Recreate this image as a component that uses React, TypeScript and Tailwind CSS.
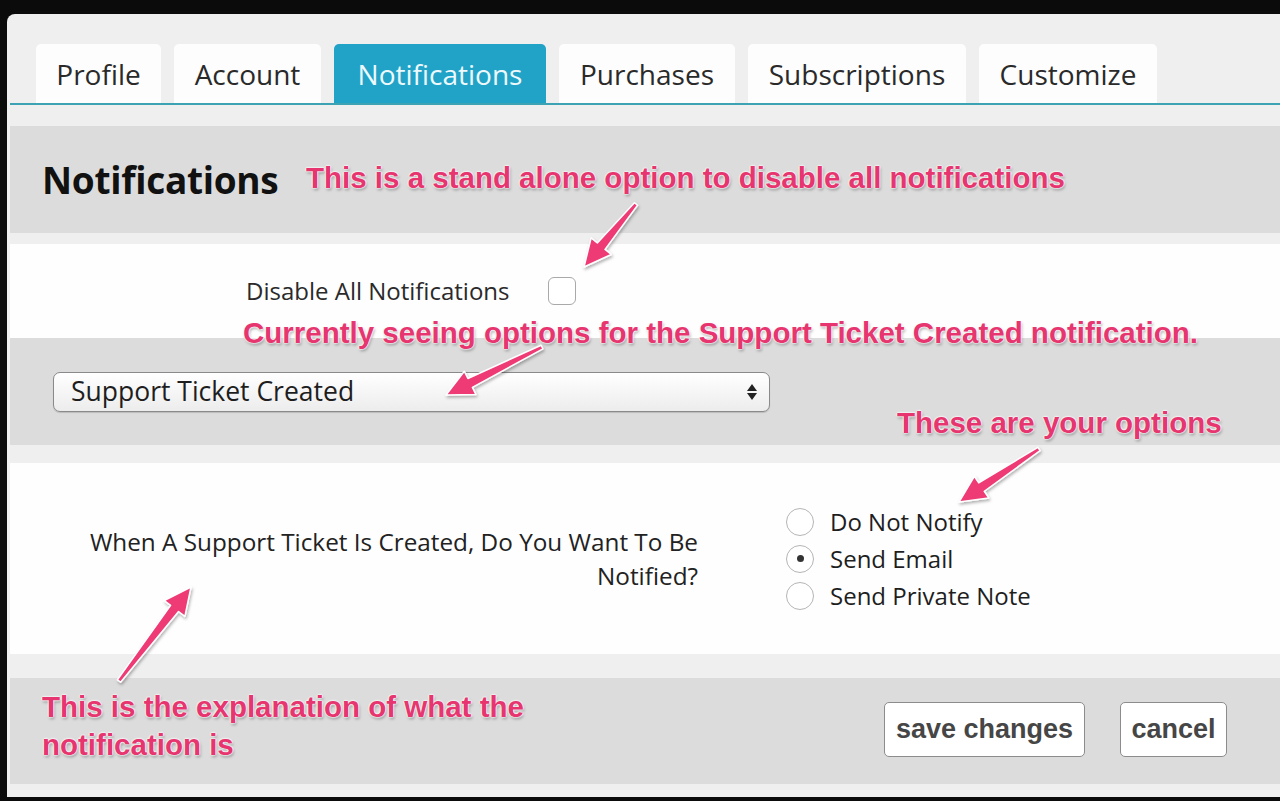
import React from "react";

const tabs = [
  { label: "Profile", w: "w-[125px]" },
  { label: "Account", w: "w-[147px]" },
  { label: "Notifications", w: "w-[212px]", active: true },
  { label: "Purchases", w: "w-[176px]" },
  { label: "Subscriptions", w: "w-[218px]" },
  { label: "Customize", w: "w-[178px]" },
];

const options = [
  { label: "Do Not Notify", checked: false },
  { label: "Send Email", checked: true },
  { label: "Send Private Note", checked: false },
];

// arrows drawn over the screenshot: tail -> tip
const arrows = [
  { x1: 636, y1: 204, x2: 584, y2: 267 },
  { x1: 542, y1: 347, x2: 446, y2: 395 },
  { x1: 1039, y1: 449, x2: 959, y2: 502 },
  { x1: 119, y1: 681, x2: 191, y2: 587 },
];

const arrowPoints = (a: { x1: number; y1: number; x2: number; y2: number }) => {
  const dx = a.x2 - a.x1;
  const dy = a.y2 - a.y1;
  const len = Math.hypot(dx, dy);
  const ux = dx / len;
  const uy = dy / len;
  const nx = -uy;
  const ny = ux;
  const head = 27;
  const bx = a.x2 - ux * head;
  const by = a.y2 - uy * head;
  const pts: [number, number][] = [
    [a.x1 + nx * 2, a.y1 + ny * 2],
    [bx + nx * 5, by + ny * 5],
    [bx + nx * 13, by + ny * 13],
    [a.x2, a.y2],
    [bx - nx * 13, by - ny * 13],
    [bx - nx * 5, by - ny * 5],
    [a.x1 - nx * 2, a.y1 - ny * 2],
  ];
  return pts.map((p) => p.join(",")).join(" ");
};

const Note: React.FC<{ className: string; children: React.ReactNode }> = ({ className, children }) => (
  <div
    className={
      "absolute font-['Liberation_Sans',Arial,sans-serif] font-bold text-[29.5px] leading-[38px] text-[#e6356f] whitespace-nowrap [text-shadow:0_0_2px_#fff,0_0_2px_#fff,0_0_2px_#fff,1px_2px_3px_rgba(0,0,0,0.35)] " +
      className
    }
  >
    {children}
  </div>
);

const App: React.FC = () => {
  return (
    <div className="relative w-[1280px] h-[801px] overflow-hidden bg-[#0b0b0c] font-['Open_Sans',sans-serif]">
      <div className="ml-[7px] mt-[14px] h-[783px] rounded-tl-[8px] bg-[#efefef] pt-[30px] flex flex-col">
        {/* tab row */}
        <div className="ml-[3px] pl-[26px] flex gap-[13px] border-b-2 border-[#3da3b4]">
          {tabs.map((t) => (
            <div
              key={t.label}
              className={
                "h-[59px] rounded-t-[5px] flex items-center justify-center text-[28px] " +
                t.w +
                (t.active ? " bg-[#20a3c7] text-[#eef9fc]" : " bg-[#fdfdfd] text-[#2a2a2a]")
              }
            >
              {t.label}
            </div>
          ))}
        </div>

        <div className="ml-[3px] flex flex-col">
          <div className="h-[21px]" />
          <div className="h-[107px] bg-[#dcdcdc] flex items-center pl-[32px]">
            <h2 className="text-[37px] font-bold text-[#111] tracking-[-0.3px]">Notifications</h2>
          </div>
          <div className="h-[11px]" />
          <div className="h-[94px] bg-[#fefefe] flex items-center pl-[236px] gap-[38px]">
            <span className="text-[24px] text-[#2a2a2a]">Disable All Notifications</span>
            <span className="w-[28px] h-[28px] rounded-[6px] border border-[#a9a9a9] bg-white" />
          </div>
          <div className="h-[107px] bg-[#dcdcdc] flex items-center pl-[43px]">
            <div className="w-[717px] h-[40px] rounded-[7px] border border-[#8a8a8a] bg-gradient-to-b from-white to-[#ececec] shadow-[0_1px_1px_rgba(0,0,0,0.15)] flex items-center justify-between pl-[17px] pr-[12px]">
              <span className="text-[26.5px] text-[#1e1e1e]">Support Ticket Created</span>
              <span className="flex flex-col items-center gap-[2px]">
                <svg width="10" height="7" viewBox="0 0 10 7">
                  <path d="M5 0 L10 7 L0 7 Z" fill="#222" />
                </svg>
                <svg width="10" height="7" viewBox="0 0 10 7">
                  <path d="M0 0 L10 0 L5 7 Z" fill="#222" />
                </svg>
              </span>
            </div>
          </div>
          <div className="h-[18px]" />
          <div className="h-[191px] bg-[#fefefe] flex items-center">
            <p className="w-[688px] text-right text-[24.3px] leading-[34px] text-[#222]">
              When A Support Ticket Is Created, Do You Want To Be
              <br />
              Notified?
            </p>
            <div className="ml-[88px] flex flex-col">
              {options.map((o) => (
                <label key={o.label} className="flex items-center gap-[16px] h-[37px]">
                  <span className="w-[28px] h-[28px] rounded-full border border-[#b5b5b5] bg-white flex items-center justify-center">
                    {o.checked && <span className="w-[7px] h-[7px] rounded-full bg-[#333]" />}
                  </span>
                  <span className="text-[24px] text-[#1e1e1e]">{o.label}</span>
                </label>
              ))}
            </div>
          </div>
          <div className="h-[24px]" />
          <div className="h-[106px] bg-[#dcdcdc] flex items-center justify-end pr-[53px] pb-[3px] gap-[35px]">
            <button className="w-[201px] h-[55px] rounded-[5px] border border-[#8c8c8c] bg-white font-['Liberation_Sans',Arial,sans-serif] font-bold text-[27px] text-[#464646]">
              save changes
            </button>
            <button className="w-[107px] h-[55px] rounded-[5px] border border-[#8c8c8c] bg-white font-['Liberation_Sans',Arial,sans-serif] font-bold text-[27px] text-[#464646]">
              cancel
            </button>
          </div>
        </div>
      </div>

      {/* annotations */}
      <Note className="left-[306px] top-[159px]">This is a stand alone option to disable all notifications</Note>
      <Note className="left-[243px] top-[314px]">Currently seeing options for the Support Ticket Created notification.</Note>
      <Note className="left-[897px] top-[404px]">These are your options</Note>
      <Note className="left-[42px] top-[688px]">
        This is the explanation of what the
        <br />
        notification is
      </Note>

      <svg className="absolute inset-0 pointer-events-none" width="1280" height="801" viewBox="0 0 1280 801">
        <defs>
          <filter id="sh" x="-20%" y="-20%" width="140%" height="140%">
            <feDropShadow dx="1" dy="2" stdDeviation="1.5" floodColor="#000" floodOpacity="0.3" />
          </filter>
        </defs>
        {arrows.map((a, i) => (
          <polygon
            key={i}
            points={arrowPoints(a)}
            fill="#ef3a74"
            stroke="#fff"
            strokeWidth="1.5"
            strokeLinejoin="round"
            filter="url(#sh)"
          />
        ))}
      </svg>
    </div>
  );
};

export default App;
